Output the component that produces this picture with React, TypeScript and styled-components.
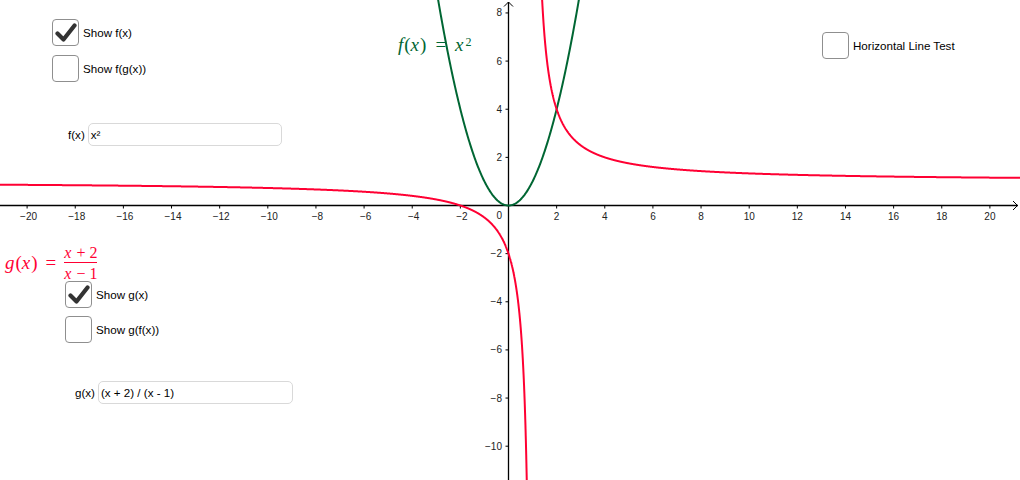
import React from "react";
import styled, { createGlobalStyle } from "styled-components";

const GREEN = "#006633";
const RED = "#ff0033";

const X0 = 508.5;
const Y0 = 205.5;
const SCALE = 24.07;
const W = 1020;
const H = 480;

const px = (x: number) => X0 + x * SCALE;
const py = (y: number) => Y0 - y * SCALE;

const GlobalStyle = createGlobalStyle`
  html, body {
    margin: 0;
    padding: 0;
    background: #ffffff;
    font-family: "Liberation Sans", Arial, sans-serif;
  }
`;

const Applet = styled.div`
  position: relative;
  width: ${W}px;
  height: ${H}px;
  overflow: hidden;
  background: #ffffff;
`;

const Canvas = styled.svg`
  display: block;
  width: ${W}px;
  height: ${H}px;
`;

const TickLabel = styled.text`
  font-family: "Liberation Sans", Arial, sans-serif;
  font-size: 10px;
  fill: #222;
`;

const Widget = styled.div<{ $x: number; $y: number }>`
  position: absolute;
  left: ${(p) => p.$x}px;
  top: ${(p) => p.$y}px;
`;

const CheckRow = styled.label`
  display: flex;
  align-items: center;
  gap: 4px;
  font-size: 11.6px;
  color: #000;
  cursor: pointer;
  white-space: nowrap;
`;

const Box = styled.span`
  box-sizing: border-box;
  width: 27px;
  height: 27px;
  border: 1.5px solid #8f8f8f;
  border-radius: 4px;
  background: #fff;
  display: flex;
  align-items: center;
  justify-content: center;
`;

const InputRow = styled.div`
  display: flex;
  align-items: center;
  gap: 3px;
  font-size: 11.6px;
  color: #000;
`;

const Field = styled.div<{ $w: number }>`
  box-sizing: border-box;
  width: ${(p) => p.$w}px;
  height: 23px;
  border: 1px solid #d9d9d9;
  border-radius: 5px;
  background: #fff;
  display: flex;
  align-items: center;
  padding-left: 2px;
`;

const MathText = styled.div<{ $color: string }>`
  display: flex;
  align-items: center;
  font-family: "Liberation Serif", "DejaVu Serif", serif;
  font-size: 19px;
  color: ${(p) => p.$color};
  white-space: nowrap;
`;

const Var = styled.span`
  font-style: italic;
  padding-right: 1px;
`;

const Op = styled.span<{ $gap?: number }>`
  margin: 0 ${(p) => p.$gap ?? 10}px;
`;

const Sup = styled.sup`
  font-size: 12px;
  position: relative;
  top: -3px;
  margin-left: 1px;
`;

const Frac = styled.span`
  display: inline-flex;
  flex-direction: column;
  align-items: center;
  font-size: 16px;
  line-height: 15px;
`;

const FracLine = styled.span<{ $color: string }>`
  display: block;
  align-self: stretch;
  height: 1px;
  background: ${(p) => p.$color};
  margin: 2px 0 3px;
`;

const Check = () => (
  <svg width="22" height="20" viewBox="0 0 22 20">
    <path
      d="M2.5 10.5 L8.5 16.5 L19.5 2.5"
      fill="none"
      stroke="#333"
      strokeWidth="4.2"
      strokeLinecap="round"
      strokeLinejoin="round"
    />
  </svg>
);

type CheckBoxProps = { checked?: boolean; label: string };

const CheckBox: React.FC<CheckBoxProps> = ({ checked, label }) => (
  <CheckRow>
    <Box>{checked && <Check />}</Box>
    <span>{label}</span>
  </CheckRow>
);

type InputProps = { label: string; value: React.ReactNode; width: number };

const InputBox: React.FC<InputProps> = ({ label, value, width }) => (
  <InputRow>
    <span>{label}</span>
    <Field $w={width}>{value}</Field>
  </InputRow>
);

const buildPath = (
  fn: (x: number) => number,
  from: number,
  to: number,
  step = 0.004
) => {
  const pts: string[] = [];
  for (let x = from; x <= to; x += step) {
    const y = fn(x);
    pts.push(`${px(x).toFixed(2)},${py(y).toFixed(2)}`);
  }
  return "M" + pts.join(" L");
};

const Axes = () => {
  const xs: number[] = [];
  for (let i = -20; i <= 20; i += 2) if (i !== 0) xs.push(i);
  const ys: number[] = [];
  for (let i = -10; i <= 8; i += 2) if (i !== 0) ys.push(i);
  const fmt = (n: number) => (n < 0 ? `\u2212${-n}` : `${n}`);

  return (
    <g>
      <line x1={0} y1={Y0} x2={W - 2} y2={Y0} stroke="#000" strokeWidth={1.3} />
      <polyline
        points={`${W - 7},${Y0 - 4.5} ${W - 2.5},${Y0} ${W - 7},${Y0 + 4.5}`}
        fill="none"
        stroke="#000"
        strokeWidth={1}
      />
      <line x1={X0} y1={H} x2={X0} y2={2} stroke="#000" strokeWidth={1.3} />
      <polyline
        points={`${X0 - 4.5},6.5 ${X0},2 ${X0 + 4.5},6.5`}
        fill="none"
        stroke="#000"
        strokeWidth={1}
      />
      {xs.map((v) => (
        <g key={`x${v}`}>
          <line x1={px(v)} y1={Y0} x2={px(v)} y2={Y0 + 3} stroke="#000" strokeWidth={1} />
          <TickLabel x={px(v) + (v < 0 ? 1.5 : 0)} y={220} textAnchor="middle">
            {fmt(v)}
          </TickLabel>
        </g>
      ))}
      {ys.map((v) => (
        <g key={`y${v}`}>
          <line x1={X0 - 3} y1={py(v)} x2={X0} y2={py(v)} stroke="#000" strokeWidth={1} />
          <TickLabel x={502} y={py(v) + 3.5} textAnchor="end">
            {fmt(v)}
          </TickLabel>
        </g>
      ))}
      <TickLabel x={502} y={219} textAnchor="end">
        0
      </TickLabel>
    </g>
  );
};

const f = (x: number) => x * x;
const g = (x: number) => (x + 2) / (x - 1);

export default function App() {
  return (
    <>
      <GlobalStyle />
      <Applet>
        <Canvas viewBox={`0 0 ${W} ${H}`}>
          <Axes />
          <path d={buildPath(f, -3.1, 3.1, 0.02)} fill="none" stroke={GREEN} strokeWidth={2} />
          <path d={buildPath(g, -21.5, 0.772)} fill="none" stroke={RED} strokeWidth={2} />
          <path d={buildPath(g, 1.375, 21.5)} fill="none" stroke={RED} strokeWidth={2} />
        </Canvas>

        <Widget $x={52} $y={19}>
          <CheckBox checked label="Show f(x)" />
        </Widget>
        <Widget $x={52} $y={55}>
          <CheckBox label="Show f(g(x))" />
        </Widget>
        <Widget $x={68} $y={123}>
          <InputBox label="f(x)" width={194} value={<span>x²</span>} />
        </Widget>

        <Widget $x={822} $y={32}>
          <CheckBox label="Horizontal Line Test" />
        </Widget>

        <Widget $x={398} $y={34}>
          <MathText $color={GREEN}>
            <Var>f</Var>(<Var>x</Var>)<Op $gap={9}>=</Op>
            <Var>x</Var>
            <Sup>2</Sup>
          </MathText>
        </Widget>

        <Widget $x={5} $y={245}>
          <MathText $color={RED}>
            <Var>g</Var>(<Var>x</Var>)<Op $gap={8}>=</Op>
            <Frac>
              <span>
                <Var>x</Var>
                <Op $gap={4}>+</Op>2
              </span>
              <FracLine $color={RED} />
              <span>
                <Var>x</Var>
                <Op $gap={4}>−</Op>1
              </span>
            </Frac>
          </MathText>
        </Widget>

        <Widget $x={65} $y={281}>
          <CheckBox checked label="Show g(x)" />
        </Widget>
        <Widget $x={65} $y={316}>
          <CheckBox label="Show g(f(x))" />
        </Widget>
        <Widget $x={75} $y={381}>
          <InputBox label="g(x)" width={195} value={<span>(x + 2) / (x - 1)</span>} />
        </Widget>
      </Applet>
    </>
  );
}
